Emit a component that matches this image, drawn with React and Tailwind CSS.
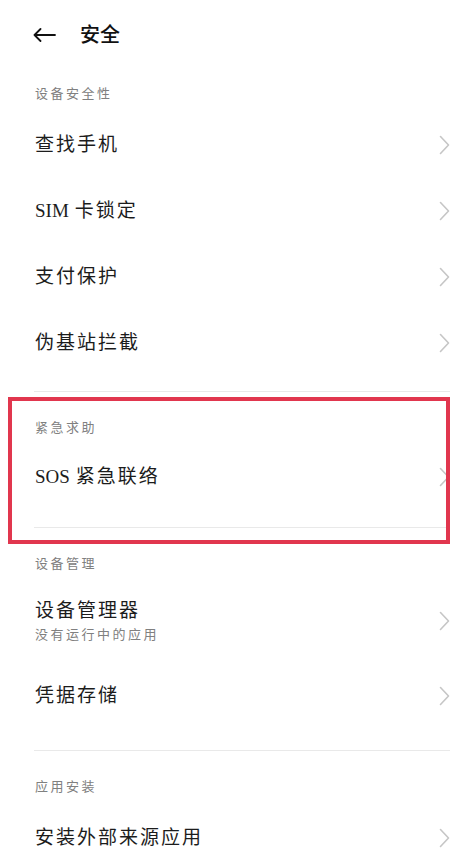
import { useState } from "react";

const FONT = {
  fontFamily: '"Liberation Serif", "Noto Sans CJK SC", serif',
};

function Chevron() {
  return (
    <svg width="11" height="20" viewBox="0 0 11 20" fill="none">
      <polyline
        points="1.5,1.5 9.5,10 1.5,18.5"
        stroke="#c6c6c6"
        strokeWidth="1.6"
        strokeLinecap="round"
        strokeLinejoin="round"
      />
    </svg>
  );
}

function SectionLabel({ text, className = "" }) {
  return (
    <div className={`pl-[35px] text-[13px] leading-[18px] tracking-[2.5px] text-[#808080] ${className}`}>
      {text}
    </div>
  );
}

function Row({ title, latin, sub, className = "h-[66px]" }) {
  return (
    <div className={`flex items-center justify-between pl-[35px] pr-[17px] ${className}`}>
      <div>
        <div className="text-[19px] leading-[24px] tracking-[2px] text-[#1c1c1c]">
          {latin && <span className="mr-[6px] tracking-normal">{latin}</span>}
          {title}
        </div>
        {sub && (
          <div className="mt-[3px] text-[13px] leading-[18px] tracking-[2.5px] text-[#808080]">
            {sub}
          </div>
        )}
      </div>
      <Chevron />
    </div>
  );
}

function Divider({ className = "" }) {
  return <div className={`ml-[34px] mr-[17px] h-px bg-[#e9e9e9] ${className}`} />;
}

export default function App() {
  const [title] = useState("安全");

  return (
    <div className="w-[467px] h-[858px] overflow-hidden bg-white" style={FONT}>
      {/* header */}
      <div className="flex h-[70px] items-center pl-[33px]">
        <svg width="23" height="14" viewBox="0 0 23 14" fill="none">
          <path
            d="M22 7H1.5M7.5 1L1.5 7l6 6"
            stroke="#111"
            strokeWidth="1.8"
            strokeLinecap="round"
            strokeLinejoin="round"
          />
        </svg>
        <span className="ml-[24px] text-[20px] font-medium text-[#111]">{title}</span>
      </div>

      {/* 设备安全性 */}
      <SectionLabel text="设备安全性" className="pt-[15px] h-[42px]" />
      <Row title="查找手机" />
      <Row latin="SIM" title="卡锁定" />
      <Row title="支付保护" />
      <Row title="伪基站拦截" />
      <Divider className="mt-[15px]" />

      {/* 紧急求助 */}
      <div className="relative">
        <SectionLabel text="紧急求助" className="pt-[27px] h-[60px]" />
        <Row latin="SOS" title="紧急联络" className="h-[50px]" />
        <Divider className="mt-[25px]" />
        <div className="absolute left-[8px] top-[5px] h-[147px] w-[442px] border-[4px] border-[#e1364e]" />
      </div>

      {/* 设备管理 */}
      <SectionLabel text="设备管理" className="pt-[27px] h-[52px]" />
      <Row title="设备管理器" sub="没有运行中的应用" className="h-[82px]" />
      <Row title="凭据存储" className="h-[68px]" />
      <Divider className="mt-[20px]" />

      {/* 应用安装 */}
      <SectionLabel text="应用安装" className="pt-[27px] h-[54px]" />
      <Row title="安装外部来源应用" />
    </div>
  );
}
